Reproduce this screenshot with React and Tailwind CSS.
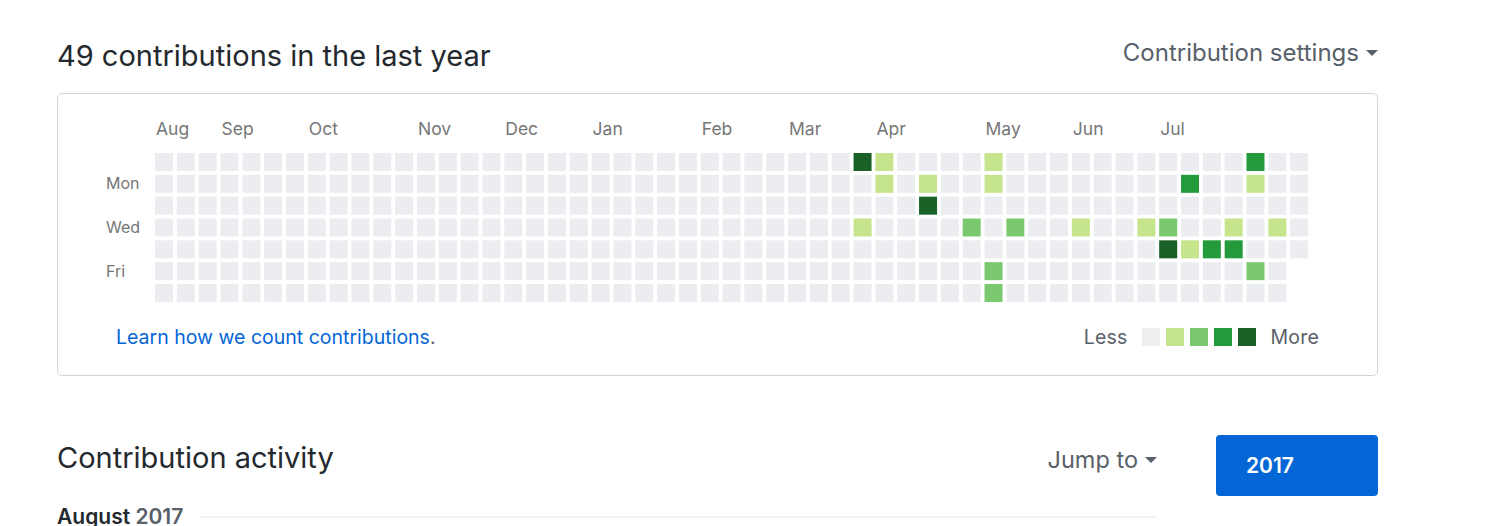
import React from "react";

const EMPTY = "#ebedf0";
const L1 = "#c6e48b";
const L2 = "#7bc96f";
const L3 = "#239a3b";
const L4 = "#196127";

const colored = {
  "32-0": L4, "33-0": L1, "38-0": L1, "50-0": L3,
  "33-1": L1, "35-1": L1, "38-1": L1, "47-1": L3, "50-1": L1,
  "35-2": L4,
  "32-3": L1, "37-3": L2, "39-3": L2, "42-3": L1, "45-3": L1, "46-3": L2, "49-3": L1, "51-3": L1,
  "46-4": L4, "47-4": L1, "48-4": L3, "49-4": L3,
  "38-5": L2, "50-5": L2,
  "38-6": L2,
};

const months = [
  ["Aug", 0], ["Sep", 3], ["Oct", 7], ["Nov", 12], ["Dec", 16], ["Jan", 20],
  ["Feb", 25], ["Mar", 29], ["Apr", 33], ["May", 38], ["Jun", 42], ["Jul", 46],
];

const PITCH = 21.83;
const X0 = 97;
const Y0 = 59;

function Graph() {
  const cells = [];
  for (let w = 0; w < 53; w++) {
    const days = w === 52 ? 5 : 7;
    for (let d = 0; d < days; d++) {
      cells.push(
        <rect
          key={`${w}-${d}`}
          x={X0 + w * PITCH}
          y={Y0 + d * PITCH}
          width="18"
          height="18"
          fill={colored[`${w}-${d}`] || EMPTY}
        />
      );
    }
  }
  return (
    <svg width="1318" height="215" className="block">
      {months.map(([m, w]) => (
        <text
          key={m}
          x={X0 + w * PITCH + 1}
          y="41"
          fill="#767676"
          style={{ fontSize: "17.5px", fontFamily: "Inter, 'Liberation Sans', sans-serif" }}
        >
          {m}
        </text>
      ))}
      {[["Mon", 95], ["Wed", 139], ["Fri", 183]].map(([d, y]) => (
        <text
          key={d}
          x="48"
          y={y}
          fill="#767676"
          style={{ fontSize: "16px", fontFamily: "Inter, 'Liberation Sans', sans-serif" }}
        >
          {d}
        </text>
      ))}
      {cells}
    </svg>
  );
}

function Caret() {
  return (
    <span className="ml-[7px] inline-block h-0 w-0 border-x-[6px] border-t-[6px] border-x-transparent border-t-[#586069] align-middle" />
  );
}

export default function App() {
  return (
    <div className="min-h-[526px] w-[1508px] overflow-hidden bg-white font-['Inter','Liberation_Sans',sans-serif] text-[#24292e]">
      <div className="ml-[57px] w-[1321px] pt-[38px]">
        <div className="flex items-center justify-between">
          <h2 className="text-[29px] leading-[36px] font-normal">49 contributions in the last year</h2>
          <div className="-mt-[7px] flex items-center text-[24px] text-[#586069]">
            Contribution settings
            <Caret />
          </div>
        </div>
        <div className="mt-[19px] h-[283px] rounded-[5px] border border-[#d1d5da]">
          <Graph />
          <div className="flex items-center justify-between px-[58px] pt-[16px] text-[19.5px] leading-[24px]">
            <div className="text-[#586069]">
              <span className="text-[#0366d6]">Learn how we count contributions</span>.
            </div>
            <div className="flex items-center tracking-[0.2px] text-[#586069]">
              <span className="mr-[14px]">Less</span>
              <div className="flex gap-[6px]">
                <span className="h-[18px] w-[18px] bg-[#eeeeee]" />
                <span className="h-[18px] w-[18px] bg-[#c6e48b]" />
                <span className="h-[18px] w-[18px] bg-[#7bc96f]" />
                <span className="h-[18px] w-[18px] bg-[#239a3b]" />
                <span className="h-[18px] w-[18px] bg-[#196127]" />
              </div>
              <span className="ml-[15px]">More</span>
            </div>
          </div>
        </div>
        <div className="mt-[62px] flex gap-[59px]">
          <div className="w-[1100px]">
            <div className="flex items-center justify-between">
              <h2 className="text-[29px] leading-[36px] font-normal">Contribution activity</h2>
              <div className="mt-[4px] flex items-center text-[23.5px] text-[#586069]">
                Jump to
                <Caret />
              </div>
            </div>
            <div className="mt-[24px] flex items-center">
              <span className="text-[21px] font-semibold text-[#24292e]">
                August <span className="text-[#586069]">2017</span>
              </span>
              <div className="ml-[16px] h-[2px] flex-1 bg-[#f3f4f6]" />
            </div>
          </div>
          <div className="-mt-[3px] w-[162px]">
            <div className="flex h-[61px] items-center rounded-[4px] bg-[#0366d6] pl-[30px] text-[21px] font-semibold text-white">
              2017
            </div>
          </div>
        </div>
      </div>
    </div>
  );
}
